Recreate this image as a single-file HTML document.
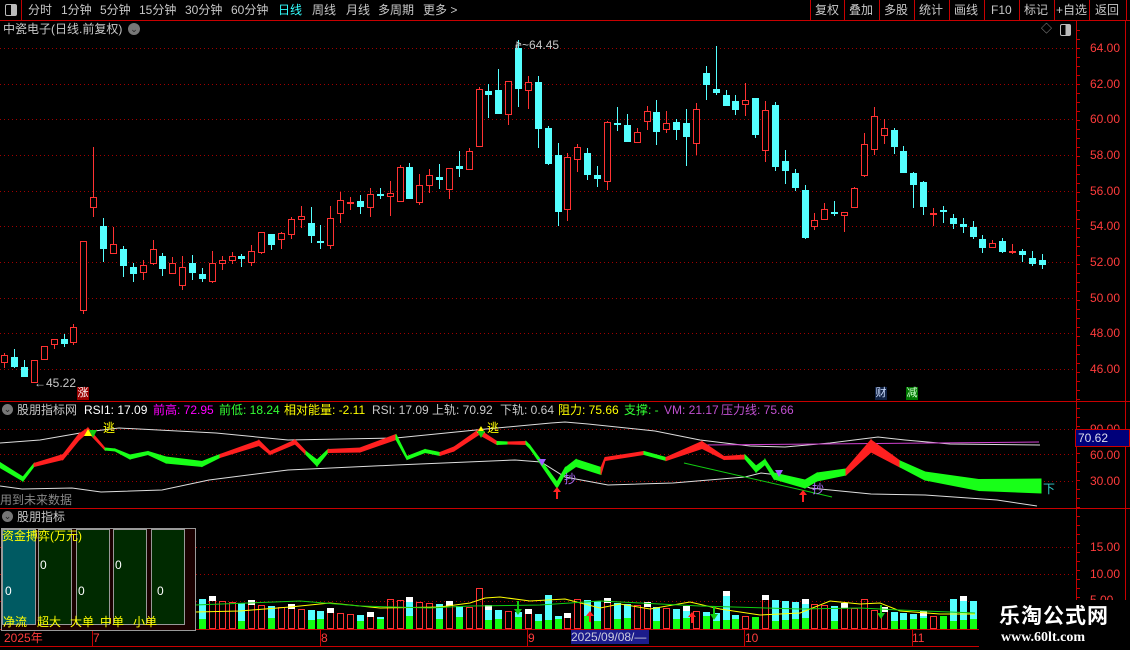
<!DOCTYPE html>
<html><head><meta charset="utf-8">
<style>
html,body{margin:0;padding:0;background:#000;width:1130px;height:650px;overflow:hidden}
body{font-family:"Liberation Sans","Noto Sans CJK SC",sans-serif;position:relative}
.t{position:absolute;white-space:nowrap;font-size:12px;line-height:14px}
svg{position:absolute;left:0;top:0}
</style></head><body>
<svg id="s" width="1130" height="650" viewBox="0 0 1130 650">
<g id="g"></g>
</svg>

<div class="t" style="left:0;top:0;width:21px;height:20px;border-right:1px solid #c00000"></div>
<div class="t" style="left:5px;top:4px;width:10px;height:10px;border:1px solid #bbb;border-radius:2px;background:linear-gradient(90deg,#000 50%,#bbb 50%)"></div>
<div class="t" style="left:28px;top:3px;color:#c8c8c8">分时</div>
<div class="t" style="left:61px;top:3px;color:#c8c8c8">1分钟</div>
<div class="t" style="left:100px;top:3px;color:#c8c8c8">5分钟</div>
<div class="t" style="left:139px;top:3px;color:#c8c8c8">15分钟</div>
<div class="t" style="left:185px;top:3px;color:#c8c8c8">30分钟</div>
<div class="t" style="left:231px;top:3px;color:#c8c8c8">60分钟</div>
<div class="t" style="left:278px;top:3px;color:#3ff">日线</div>
<div class="t" style="left:312px;top:3px;color:#c8c8c8">周线</div>
<div class="t" style="left:346px;top:3px;color:#c8c8c8">月线</div>
<div class="t" style="left:378px;top:3px;color:#c8c8c8">多周期</div>
<div class="t" style="left:423px;top:3px;color:#c8c8c8">更多 &gt;</div>
<div class="t" style="left:815px;top:3px;color:#c8c8c8">复权</div>
<div class="t" style="left:849px;top:3px;color:#c8c8c8">叠加</div>
<div class="t" style="left:884px;top:3px;color:#c8c8c8">多股</div>
<div class="t" style="left:919px;top:3px;color:#c8c8c8">统计</div>
<div class="t" style="left:954px;top:3px;color:#c8c8c8">画线</div>
<div class="t" style="left:991px;top:3px;color:#c8c8c8">F10</div>
<div class="t" style="left:1024px;top:3px;color:#c8c8c8">标记</div>
<div class="t" style="left:1056px;top:3px;color:#c8c8c8">+自选</div>
<div class="t" style="left:1095px;top:3px;color:#c8c8c8">返回</div>
<div class="t" style="left:3px;top:22px;color:#c8c8c8">中瓷电子(日线.前复权)</div>
<div class="t" style="left:128px;top:23px;width:12px;height:12px;border-radius:6px;background:#777;color:#222;font-size:9px;line-height:12px;text-align:center">⌄</div>
<div class="t" style="left:1041px;top:22px;color:#999;font-size:11px">◇</div>
<div class="t" style="left:1060px;top:24px;width:9px;height:10px;border:1px solid #bbb;border-radius:2px;background:linear-gradient(90deg,#000 50%,#bbb 50%)"></div>

<div class="t" style="left:1090px;top:41px;color:#ff3c3c">64.00</div>
<div class="t" style="left:1090px;top:77px;color:#ff3c3c">62.00</div>
<div class="t" style="left:1090px;top:112px;color:#ff3c3c">60.00</div>
<div class="t" style="left:1090px;top:148px;color:#ff3c3c">58.00</div>
<div class="t" style="left:1090px;top:184px;color:#ff3c3c">56.00</div>
<div class="t" style="left:1090px;top:219px;color:#ff3c3c">54.00</div>
<div class="t" style="left:1090px;top:255px;color:#ff3c3c">52.00</div>
<div class="t" style="left:1090px;top:291px;color:#ff3c3c">50.00</div>
<div class="t" style="left:1090px;top:326px;color:#ff3c3c">48.00</div>
<div class="t" style="left:1090px;top:362px;color:#ff3c3c">46.00</div>
<div class="t" style="left:34px;top:376px;color:#c8c8c8">←45.22</div>
<div class="t" style="left:515px;top:38px;color:#c8c8c8">⌐~64.45</div>
<div class="t" style="left:77px;top:387px;width:12px;height:13px;background:#900;color:#fff;font-size:11px;line-height:13px;text-align:center">涨</div>
<div class="t" style="left:875px;top:387px;width:12px;height:13px;background:#124;color:#cdf;font-size:11px;line-height:13px;text-align:center">财</div>
<div class="t" style="left:906px;top:387px;width:12px;height:13px;background:#070;color:#cfc;font-size:11px;line-height:13px;text-align:center">减</div>

<div class="t" style="left:2px;top:404px;width:11px;height:11px;border-radius:6px;background:#777;color:#222;font-size:9px;line-height:11px;text-align:center">⌄</div>
<div class="t" style="left:17px;top:403px;color:#c8c8c8">股朋指标网</div>
<div class="t" style="left:84px;top:403px;color:#fff">RSI1: 17.09</div>
<div class="t" style="left:153px;top:403px;color:#f0f">前高: <span>72.95</span></div>
<div class="t" style="left:219px;top:403px;color:#3f3">前低: 18.24</div>
<div class="t" style="left:284px;top:403px;color:#ff0">相对能量: -2.11</div>
<div class="t" style="left:372px;top:403px;color:#c8c8c8">RSI: 17.09</div>
<div class="t" style="left:432px;top:403px;color:#c8c8c8">上轨: 70.92</div>
<div class="t" style="left:500px;top:403px;color:#c8c8c8">下轨: 0.64</div>
<div class="t" style="left:558px;top:403px;color:#ff0">阻力: 75.66</div>
<div class="t" style="left:624px;top:403px;color:#3f3">支撑: -</div>
<div class="t" style="left:664px;top:403px;color:#c050d0">VM: 21.17</div>
<div class="t" style="left:721px;top:403px;color:#c050d0">压力线: 75.66</div>
<div class="t" style="left:1090px;top:422px;color:#ff3c3c">90.00</div>
<div class="t" style="left:1075px;top:429px;width:51px;height:16px;background:#00007a;border:1px solid #c00;color:#dde;line-height:16px;padding-left:2px;font-size:12px">70.62</div>
<div class="t" style="left:1090px;top:448px;color:#ff3c3c">60.00</div>
<div class="t" style="left:1090px;top:474px;color:#ff3c3c">30.00</div>
<div class="t" style="left:103px;top:421px;color:#ff0">逃</div>
<div class="t" style="left:487px;top:421px;color:#ff0">逃</div>
<div class="t" style="left:564px;top:472px;color:#b070ff">抄</div>
<div class="t" style="left:812px;top:482px;color:#b070ff">抄</div>
<div class="t" style="left:1043px;top:482px;color:#3cc">下</div>
<div class="t" style="left:0;top:493px;color:#888">用到未来数据</div>
<div class="t" style="left:2px;top:511px;width:11px;height:11px;border-radius:6px;background:#777;color:#222;font-size:9px;line-height:11px;text-align:center">⌄</div>
<div class="t" style="left:17px;top:510px;color:#c8c8c8">股朋指标</div>
<div class="t" style="left:1090px;top:540px;color:#ff3c3c">15.00</div>
<div class="t" style="left:1090px;top:567px;color:#ff3c3c">10.00</div>
<div class="t" style="left:1090px;top:593px;color:#ff3c3c;height:7px;overflow:hidden">5.00</div>

<div class="t" style="left:1px;top:528px;width:193px;height:101px;border:1px solid #999;background:#1a0000"></div>
<div class="t" style="left:2px;top:529px;width:32px;height:94px;background:#005a62;border:1px solid #999"></div>
<div class="t" style="left:38px;top:529px;width:32px;height:94px;background:#002a00;border:1px solid #999"></div>
<div class="t" style="left:76px;top:529px;width:32px;height:94px;background:#002a00;border:1px solid #999"></div>
<div class="t" style="left:113px;top:529px;width:32px;height:94px;background:#002a00;border:1px solid #999"></div>
<div class="t" style="left:151px;top:529px;width:32px;height:94px;background:#002a00;border:1px solid #999"></div>
<div class="t" style="left:2px;top:529px;color:#ff0;font-size:12px">资金搏弈(万元)</div>
<div class="t" style="left:40px;top:558px;color:#fff">0</div>
<div class="t" style="left:115px;top:558px;color:#fff">0</div>
<div class="t" style="left:5px;top:584px;color:#fff">0</div>
<div class="t" style="left:78px;top:584px;color:#fff">0</div>
<div class="t" style="left:157px;top:584px;color:#fff">0</div>
<div class="t" style="left:3px;top:615px;color:#ff0">净流</div>
<div class="t" style="left:37px;top:615px;color:#ff0">超大</div>
<div class="t" style="left:70px;top:615px;color:#ff0">大单</div>
<div class="t" style="left:100px;top:615px;color:#ff0">中单</div>
<div class="t" style="left:133px;top:615px;color:#ff0">小单</div>

<div class="t" style="left:4px;top:631px;color:#ff3c3c">2025年</div>
<div class="t" style="left:93px;top:631px;color:#ff3c3c">7</div>
<div class="t" style="left:321px;top:631px;color:#ff3c3c">8</div>
<div class="t" style="left:528px;top:631px;color:#ff3c3c">9</div>
<div class="t" style="left:571px;top:630px;width:78px;height:14px;background:#1c1c8c;color:#ccd;font-size:12px">2025/09/08/—</div>
<div class="t" style="left:745px;top:631px;color:#ff3c3c">10</div>
<div class="t" style="left:912px;top:631px;color:#ff3c3c">11</div>
<div class="t" style="left:979px;top:600px;width:151px;height:50px;background:#000"></div>
<div class="t" style="left:999px;top:604px;color:#fff;font-size:21px;line-height:26px;font-weight:bold;letter-spacing:1px">乐淘公式网</div>
<div class="t" style="left:1001px;top:631px;color:#fff;font-family:'Liberation Serif',serif;font-weight:bold;font-size:14px">www.60lt.com</div>

<script>
(function(){
var NS="http://www.w3.org/2000/svg",G=document.getElementById("g");
function el(t,a){var e=document.createElementNS(NS,t);for(var k in a)e.setAttribute(k,a[k]);G.appendChild(e);return e;}
var R="#ff3232",C="#54ffff",LR="#c80000";
[48,84,119,155,191,226,262,298,333,369,429,454,481,547,574,601].forEach(function(y){el("line",{x1:0,y1:y+.5,x2:1076,y2:y+.5,stroke:"#a00000","stroke-dasharray":"1 3"});});
el("line",{x1:0,y1:20.5,x2:1130,y2:20.5,stroke:LR});
[810,844,879,914,949,984,1019,1054,1089,1126].forEach(function(x){el("line",{x1:x+.5,y1:0,x2:x+.5,y2:20,stroke:LR});});
el("line",{x1:0,y1:401.5,x2:1130,y2:401.5,stroke:LR});
el("line",{x1:0,y1:508.5,x2:1130,y2:508.5,stroke:LR});
el("line",{x1:0,y1:629.5,x2:979,y2:629.5,stroke:LR});
el("line",{x1:0,y1:646.5,x2:979,y2:646.5,stroke:LR});
el("line",{x1:1076.5,y1:20,x2:1076.5,y2:600,stroke:LR});
el("line",{x1:1125.5,y1:20,x2:1125.5,y2:600,stroke:LR});
for(var y=30;y<600;y+=9){el("line",{x1:1076,y1:y+.5,x2:1080,y2:y+.5,stroke:LR});}
[92,320,527,744,912].forEach(function(x){el("line",{x1:x+.5,y1:630,x2:x+.5,y2:646,stroke:LR});});
var D=[[353,368,355,362,'r'],[349,368,357,367,'c'],[360,377,367,377,'c'],[360,383,360,382,'r'],[346,359,346,359,'r'],[339,349,339,344,'r'],[334,347,339,344,'c'],[324,345,327,342,'r'],[241,314,241,310,'r'],[147,217,197,207,'r'],
[218,262,226,249,'c'],[227,253,244,253,'r'],[246,277,249,266,'c'],[263,282,267,274,'c'],[260,280,265,272,'r'],[240,265,249,263,'r'],[253,276,256,269,'c'],[257,273,263,273,'r'],[256,290,267,285,'r'],[255,280,263,273,'c'],
[268,282,274,279,'c'],[251,283,263,281,'r'],[256,270,260,263,'r'],[252,264,256,260,'r'],[254,267,256,259,'c'],[245,266,251,262,'r'],[232,254,232,252,'r'],[234,250,234,245,'c'],[232,249,233,239,'r'],[217,239,219,234,'r'],
[206,228,216,219,'r'],[207,243,223,236,'c'],[225,249,241,241,'cx'],[206,249,218,245,'r'],[192,223,200,213,'r'],[197,210,202,202,'rx'],[195,214,201,207,'c'],[188,217,194,207,'r'],[188,199,194,194,'cx'],[181,216,193,196,'r'],
[165,201,167,201,'r'],[163,199,167,199,'c'],[174,205,185,202,'r'],[169,193,175,185,'r'],[164,189,177,180,'c'],[168,199,168,189,'r'],[151,177,166,169,'c'],[148,169,151,169,'r'],[87,146,89,146,'r'],[84,118,91,95,'c'],
[69,114,90,114,'c'],[81,125,81,114,'r'],[40,107,48,89,'c'],[76,109,82,90,'r'],[76,148,82,129,'c'],[126,165,128,164,'c'],[143,226,155,212,'c'],[153,221,157,209,'r'],[144,172,147,159,'r'],[148,180,153,175,'c'],
[166,187,175,179,'c'],[121,190,122,181,'r'],[107,131,123,125,'c'],[114,142,125,142,'c'],[128,142,132,142,'r'],[106,130,111,121,'r'],[100,145,112,132,'c'],[111,133,123,129,'r'],[119,140,122,130,'c'],[109,166,123,137,'c'],
[103,155,109,143,'r'],[66,100,73,85,'c'],[46,95,89,93,'c'],[90,106,95,106,'c'],[95,115,101,110,'c'],[83,116,100,104,'r'],[98,138,98,135,'c'],[101,162,110,150,'r'],[102,171,105,167,'c'],[150,184,161,171,'c'],
[169,191,173,188,'c'],[185,239,190,238,'c'],[213,230,220,226,'r'],[203,219,209,219,'r'],[201,216,212,214,'c'],[212,232,212,215,'r'],[187,207,188,207,'r'],[133,177,144,175,'r'],[107,155,116,149,'r'],[119,144,128,135,'r'],
[128,154,130,147,'c'],[146,173,151,173,'c'],[172,208,173,185,'c'],[181,215,182,207,'c'],[208,226,213,213,'rx'],[206,223,210,212,'cx'],[214,229,218,224,'c'],[218,233,224,227,'c'],[221,239,227,237,'c'],[235,253,239,248,'c'],
[240,247,243,247,'r'],[238,253,241,252,'c'],[244,254,251,251,'rx'],[249,262,251,255,'c'],[251,266,258,264,'c'],[254,269,260,265,'c']];
function X(i){return Math.round(4.3+9.88*i);}
D.forEach(function(d,i){var x=X(i),col=d[4][0]=='r'?R:C;
 el("line",{x1:x+.5,y1:d[0],x2:x+.5,y2:d[1],stroke:col});
 if(d[4].length>1||d[3]-d[2]<2){el("rect",{x:x-3,y:d[2],width:7,height:2,fill:col});}
 else if(d[4]=='r'){el("rect",{x:x-2.5,y:d[2]+.5,width:6,height:d[3]-d[2],fill:"#000",stroke:col});}
 else el("rect",{x:x-3,y:d[2],width:7,height:d[3]-d[2],fill:col});
});
el("polyline",{points:"517,50 517,42 521,44",fill:"none",stroke:"#ccc"});
function pl(p,c,w){el("polyline",{points:p,fill:"none",stroke:c,"stroke-width":w||1});}
pl("0,443 40,440 86,432 119,428 216,433 288,440 396,438 486,429 551,423 565,422 588,424 655,431 700,440 750,446 785,447 830,443 878,437 905,440 950,444 1040,445","#ddd");
pl("0,486 22,489 72,488 101,492 162,490 209,480 288,470 396,465 515,460 541,462 565,477 608,485 673,483 745,477 761,473 778,475 810,488 871,494 925,495 997,500 1037,506","#ddd");
pl("704,445 1039,442","#d040d0");
pl("684,463 832,497","#1c1");
var P=[[0,465,'g',5],[23,479,'g',4],[34,465,'g',3],[63,457,'r',5],[79,437,'r',6],[88,430,'r',4],[105,449,'r',2],[115,450,'g',2],[130,457,'g',4],[148,453,'g',3],[166,460,'g',6],[202,464,'g',5],[220,456,'g',3],[259,443,'r',5],[270,453,'r',3],[295,442,'r',4],[306,453,'r',3],[317,463,'g',6],[328,451,'g',3],[360,450,'r',4],[396,437,'r',5],[407,458,'g',3],[425,451,'g',3],[440,454,'g',3],[454,449,'r',4],[479,432,'r',5],[497,443,'r',3],[508,443,'g',2],[526,443,'r',3],[530,447,'g',3],[557,485,'g',6],[565,471,'g',6],[576,463,'g',7],[601,471,'g',7],[605,459,'r',3],[644,453,'r',3],[666,459,'g',3],[702,445,'r',7],[724,458,'r',3],[745,457,'r',4],[756,469,'g',6],[765,462,'g',5],[774,476,'g',6],[805,484,'g',8],[817,477,'g',8],[846,472,'g',6],[871,446,'r',12],[900,464,'r',6],[925,476,'g',8],[979,485,'g',11],[1041,486,'g',14]];
for(var i=0;i<P.length-1;i++){var a=P[i],b=P[i+1],c=b[2]=='r'?'#ff2020':'#18ff18',w1=a[3],w2=b[3];
 el("polygon",{points:a[0]+","+(a[1]-w1/2)+" "+b[0]+","+(b[1]-w2/2)+" "+b[0]+","+(b[1]+w2/2)+" "+a[0]+","+(a[1]+w1/2),fill:c,stroke:c,"stroke-width":1});}
el("polygon",{points:"84,436 88,429 92,436",fill:"#ff0"});el("polygon",{points:"89,430 97,430 93,438",fill:"#1c1"});
el("polygon",{points:"477,433 481,426 485,433",fill:"#ff0"});el("polygon",{points:"477,431 485,431 481,438",fill:"#1c1"});
el("polygon",{points:"538,459 546,459 542,466",fill:"#a060ff"});el("polygon",{points:"775,470 783,470 779,477",fill:"#a060ff"});
[[557,487],[803,490]].forEach(function(p){el("polygon",{points:(p[0]-4)+","+(p[1]+5)+" "+p[0]+","+p[1]+" "+(p[0]+4)+","+(p[1]+5),fill:"#f22"});el("rect",{x:p[0]-1,y:p[1]+5,width:2,height:7,fill:"#f22"});});
for(var i=20;i<99;i++){var x=X(i),d=D[i],h=12+((i*37)%19);if(i==48)h=41;if(i==73||i==55)h=34;if(i==87)h=30;var ty=629-h;
 if(d[4][0]=='c'){el("rect",{x:x-3,y:ty,width:7,height:h,fill:C});var gh=8+((i*7)%6);el("rect",{x:x-3,y:629-gh,width:7,height:gh,fill:"#1f1"});}
 else{el("rect",{x:x-2.5,y:ty+.5,width:6,height:h-1,fill:"none",stroke:R});}
 if(i%4==1)el("rect",{x:x-3,y:ty-4,width:7,height:5,fill:"#fff"});}
pl("195,612 240,611 290,607 330,603 380,608 440,607 470,603 485,598 500,597 530,601 565,599 600,608 620,604 650,609 690,602 720,609 760,615 800,613 830,601 860,604 880,603 900,611 940,614 975,614","#ff0");
pl("195,605 300,601 360,606 430,608 470,606 540,605 600,601 700,606 800,609 860,608 900,610 975,613","#1c1");
[[590,611],[692,612]].forEach(function(p){el("polygon",{points:(p[0]-4)+","+(p[1]+5)+" "+p[0]+","+p[1]+" "+(p[0]+4)+","+(p[1]+5),fill:"#f22"});el("rect",{x:p[0]-1,y:p[1]+5,width:2,height:6,fill:"#f22"});});
[[518,601],[714,606],[881,605]].forEach(function(p){el("rect",{x:p[0]-1,y:p[1],width:2,height:8,fill:"#1c1"});el("polygon",{points:(p[0]-4)+","+(p[1]+8)+" "+p[0]+","+(p[1]+14)+" "+(p[0]+4)+","+(p[1]+8),fill:"#1c1"});});
})();
</script>
</body></html>
